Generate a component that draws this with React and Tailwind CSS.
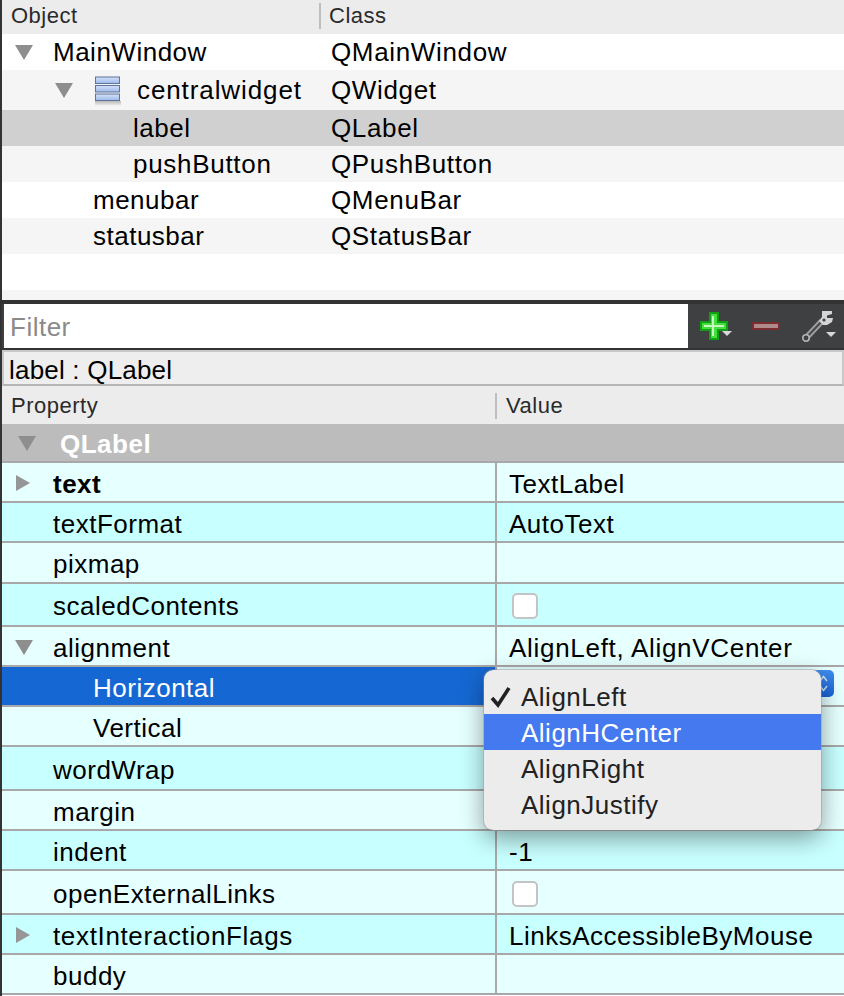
const objects = [
  { name: 'MainWindow', cls: 'QMainWindow', h: 'h-[36px]', bg: 'bg-white', indent: 'pl-[53px]', arrow: 'left-[13px] top-[11px]' },
  { name: 'centralwidget', cls: 'QWidget', h: 'h-[40px]', bg: 'bg-[#f5f5f5]', indent: 'pl-[137px] tracking-[0.9px]', arrow: 'left-[53px] top-[13px]', icon: true },
  { name: 'label', cls: 'QLabel', h: 'h-[36px]', bg: 'bg-[#d0d0d0]', indent: 'pl-[133px]' },
  { name: 'pushButton', cls: 'QPushButton', h: 'h-[36px]', bg: 'bg-[#f5f5f5]', indent: 'pl-[133px] tracking-[0.7px]' },
  { name: 'menubar', cls: 'QMenuBar', h: 'h-[36px]', bg: 'bg-white', indent: 'pl-[93px]' },
  { name: 'statusbar', cls: 'QStatusBar', h: 'h-[36px]', bg: 'bg-[#f5f5f5]', indent: 'pl-[93px]' },
]

const props = [
  { name: 'text', value: 'TextLabel', h: 'h-[40px]', bold: true, arrow: 'right' },
  { name: 'textFormat', value: 'AutoText', h: 'h-[40px]', dark: true },
  { name: 'pixmap', h: 'h-[41px]' },
  { name: 'scaledContents', h: 'h-[43px]', dark: true, check: true },
  { name: 'alignment', value: 'AlignLeft, AlignVCenter', h: 'h-[40px]', arrow: 'down', valueClass: 'tracking-[0.7px]' },
  { name: 'Horizontal', h: 'h-[40px]', sub: true, selected: true },
  { name: 'Vertical', h: 'h-[40px]', sub: true },
  { name: 'wordWrap', h: 'h-[44px]', dark: true },
  { name: 'margin', h: 'h-[40px]' },
  { name: 'indent', value: '-1', h: 'h-[40px]', dark: true },
  { name: 'openExternalLinks', h: 'h-[44px]', check: true },
  { name: 'textInteractionFlags', value: 'LinksAccessibleByMouse', h: 'h-[40px]', dark: true, arrow: 'right', nameClass: 'tracking-[0.65px]' },
  { name: 'buddy', h: 'h-[40px]' },
]

function Down({ className = '' }) {
  return (
    <svg width="18" height="15" viewBox="0 0 18 15" className={className}>
      <path d="M0 0H18L9 15Z" fill="#8e8e8e" />
    </svg>
  )
}

function Right() {
  return (
    <svg width="14" height="16" viewBox="0 0 14 16">
      <path d="M0 0L14 8L0 16Z" fill="#969696" />
    </svg>
  )
}

function LayoutIcon() {
  return (
    <svg width="28" height="30" viewBox="0 0 28 30">
      <defs>
        <linearGradient id="shade" x1="0" y1="0" x2="0" y2="1">
          <stop offset="0" stopColor="#8f8f8f" stopOpacity="0.6" />
          <stop offset="1" stopColor="#8f8f8f" stopOpacity="0" />
        </linearGradient>
        <linearGradient id="bar" x1="0" y1="0" x2="0" y2="1">
          <stop offset="0" stopColor="#d5e2f8" />
          <stop offset="1" stopColor="#9db9ea" />
        </linearGradient>
      </defs>
      <rect x="1" y="25" width="26" height="5" fill="url(#shade)" />
      {[1, 9.5, 18].map(y => (
        <rect key={y} x="1.5" y={y} width="24" height="6.5" fill="url(#bar)" stroke="#5f7499" strokeWidth="1" />
      ))}
    </svg>
  )
}

function Caret({ className }) {
  return <span className={`absolute w-0 h-0 border-x-[5px] border-x-transparent border-t-[5px] border-t-[#d8d8d8] ${className}`} />
}

function PlusIcon() {
  return (
    <svg width="28" height="28" viewBox="0 0 28 28">
      <path d="M10 1H18V10H27V18H18V27H10V18H1V10H10Z" fill="#43e03c" stroke="#0fa015" strokeWidth="2" />
      <path d="M13 4V24M4 14H24" stroke="#c9f7c2" strokeWidth="2" />
    </svg>
  )
}

function MinusIcon() {
  return (
    <svg width="28" height="8" viewBox="0 0 28 8">
      <rect x="1" y="1" width="26" height="6" fill="#b08a8a" stroke="#7a2d30" strokeWidth="2" />
    </svg>
  )
}

function WrenchIcon() {
  return (
    <svg width="32" height="34" viewBox="0 0 32 34">
      <path d="M4 29L20 12" stroke="#a2a2a2" strokeWidth="6" />
      <path d="M4 29L20 12" stroke="#4a4a4c" strokeWidth="2.2" />
      <circle cx="4" cy="29" r="3.2" fill="#3f4042" stroke="#b5b5b5" strokeWidth="1.6" />
      <path d="M20 2H30V5L25 6.5V9L31 9L30 13L25 16H21L17 12L20 8Z" fill="#d4d4d4" />
      <circle cx="22" cy="11" r="1.6" fill="#3f4042" />
    </svg>
  )
}

function Checkbox() {
  return <span className="block w-[26px] h-[26px] ml-[3px] rounded-[5px] bg-white border-2 border-[#c4c4c4]" />
}

function PropRow({ row }) {
  const bg = row.selected ? 'bg-[#1568d3]' : row.dark ? 'bg-[#c8ffff]' : 'bg-[#e6ffff]'
  return (
    <div className={`flex ${row.h} border-b-2 border-[#a8a8a8] ${row.dark ? 'bg-[#c8ffff]' : 'bg-[#e6ffff]'}`}>
      <div className={`relative w-[493px] flex items-center pt-[3px] ${bg} ${row.sub ? 'pl-[91px]' : 'pl-[51px]'} ${row.selected ? 'text-white' : 'text-black'} ${row.bold ? 'font-bold' : ''} ${row.nameClass || ''}`}>
        {row.arrow === 'right' && <span className="absolute left-[14px] top-[12px]"><Right /></span>}
        {row.arrow === 'down' && <span className="absolute left-[13px] top-[13px]"><Down /></span>}
        {row.name}
      </div>
      <div className="w-[2px] bg-[#a8a8a8]" />
      <div className={`flex-1 flex items-center pl-[12px] pt-[3px] text-black ${row.valueClass || ''}`}>
        {row.check ? <Checkbox /> : row.value}
      </div>
    </div>
  )
}

export default function App() {
  return (
    <div className="relative w-[844px] h-[996px] overflow-hidden bg-white border-l-2 border-[#333] font-['Liberation_Sans',sans-serif] text-[26px] tracking-[0.5px] leading-none">
      {/* object inspector */}
      <div className="flex items-center h-[34px] pb-[2px] bg-[#ececec] text-[22px] text-[#2a2a2a]">
        <span className="w-[317px] pl-[9px]">Object</span>
        <span className="w-[2px] h-[26px] bg-[#bdbdbd]" />
        <span className="pl-[8px]">Class</span>
      </div>
      {objects.map(o => (
        <div key={o.name} className={`relative flex items-center ${o.h} ${o.bg} text-black`}>
          {o.arrow && <span className={`absolute flex ${o.arrow}`}><Down /></span>}
          {o.icon && <span className="absolute left-[92px] top-[6px]"><LayoutIcon /></span>}
          <span className={`w-[327px] ${o.indent} -ml-[2px]`}>{o.name}</span>
          <span className="pl-[4px] tracking-[0.65px]">{o.cls}</span>
        </div>
      ))}
      <div className="h-[36px] bg-white" />
      <div className="h-[10px] bg-[#f5f5f5]" />
      <div className="h-[4px] bg-[#333]" />

      {/* filter bar */}
      <div className="flex h-[44px] bg-[#3f4042] pl-[2px]">
        <div className="w-[684px] shrink-0 bg-white flex items-center pl-[6px] pt-[2px] text-[#8a8a8a]">Filter</div>
        <div className="flex-1 flex items-center pl-[12px]">
          <span className="relative mr-[24px] flex"><PlusIcon /><Caret className="right-[-4px] bottom-[4px]" /></span>
          <span className="mr-[22px] flex"><MinusIcon /></span>
          <span className="relative flex"><WrenchIcon /><Caret className="right-[-2px] bottom-[6px]" /></span>
        </div>
      </div>
      <div className="h-[2px] bg-[#333]" />

      {/* property editor */}
      <div className="flex items-center h-[36px] pt-[4px] bg-[#eeeeee] border-2 border-t-[#c8c8c8] border-x-[#c8c8c8] border-b-[#b5b5b5] pl-[5px] text-black tracking-[0.2px]">label : QLabel</div>
      <div className="flex items-center h-[38px] pt-[2px] bg-[#ececec] text-[22px] text-[#2a2a2a]">
        <span className="w-[493px] pl-[9px]">Property</span>
        <span className="w-[2px] h-[26px] bg-[#bdbdbd]" />
        <span className="pl-[9px]">Value</span>
      </div>
      <div className="relative flex items-center h-[39px] pt-[3px] bg-[#bcbcbc] border-b-2 border-[#a8a8a8] pl-[58px] font-bold text-white">
        <span className="absolute left-[16px] top-[12px]"><Down /></span>
        QLabel
      </div>
      {props.map(row => <PropRow key={row.name} row={row} />)}

      {/* combobox stepper behind the popup */}
      <div className="absolute left-[810px] top-[670px] w-[22px] h-[27px] rounded-[5px] bg-gradient-to-b from-[#3f8cf0] to-[#1a63d6]">
        <svg width="22" height="27" viewBox="0 0 22 27" fill="none" stroke="#cfe2fb" strokeWidth="1.5">
          <path d="M8 11L11.5 6.5L15 11M8 16L11.5 20.5L15 16" />
        </svg>
      </div>

      {/* open combobox list */}
      <div className="absolute left-[482px] top-[670px] w-[337px] h-[160px] rounded-[9px] bg-[#ececec] py-[8px] overflow-hidden text-[#222]">
        {['AlignLeft', 'AlignHCenter', 'AlignRight', 'AlignJustify'].map((item, i) => (
          <div key={item} className={`relative flex items-center h-[36px] pt-[2px] pl-[37px] ${i === 1 ? 'bg-[#4479f0] text-white' : ''}`}>
            {i === 0 && (
              <svg width="22" height="22" viewBox="0 0 22 22" fill="none" stroke="#222" strokeWidth="3.6" className="absolute left-[6px] top-[8px]">
                <path d="M2 12L8 19L19 2" />
              </svg>
            )}
            {item}
          </div>
        ))}
      </div>
      <div className="absolute left-[482px] top-[670px] w-[337px] h-[160px] rounded-[9px] pointer-events-none shadow-[0_0_0_1px_rgba(150,150,150,0.45),0_8px_24px_rgba(0,0,0,0.4)]" />
    </div>
  )
}
